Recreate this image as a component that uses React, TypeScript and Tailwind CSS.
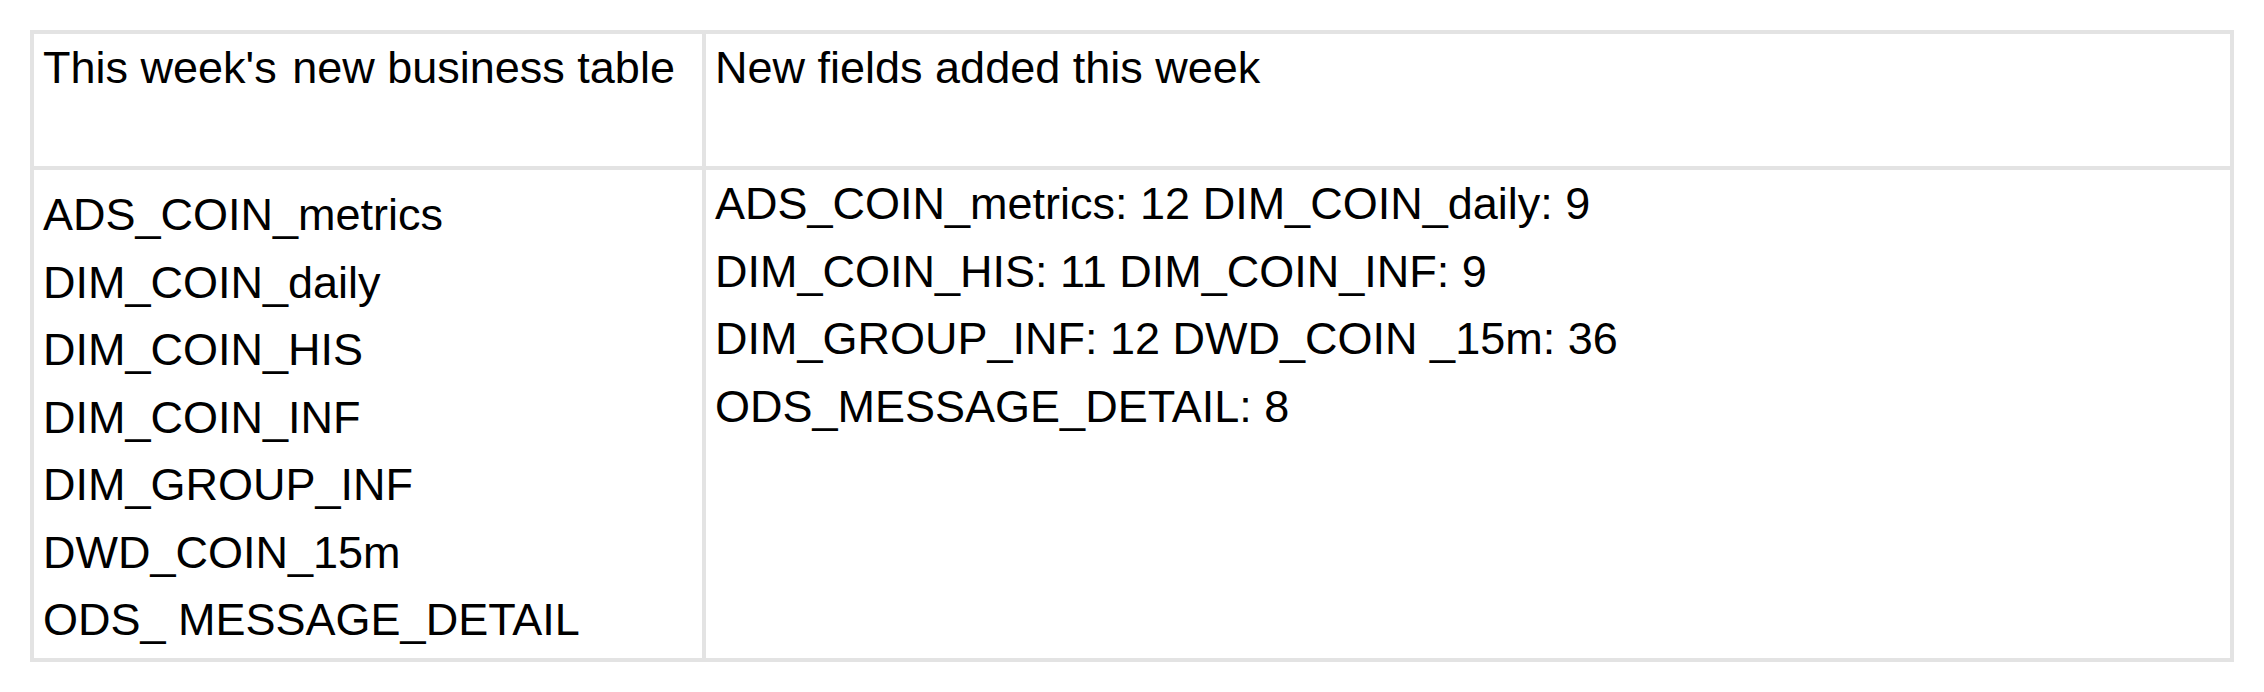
const LEFT_ROWS = [
  "ADS_COIN_metrics",
  "DIM_COIN_daily",
  "DIM_COIN_HIS",
  "DIM_COIN_INF",
  "DIM_GROUP_INF",
  "DWD_COIN_15m",
  "ODS_ MESSAGE_DETAIL",
];

const RIGHT_ROWS = [
  "ADS_COIN_metrics: 12 DIM_COIN_daily: 9",
  "DIM_COIN_HIS: 11 DIM_COIN_INF: 9",
  "DIM_GROUP_INF: 12 DWD_COIN _15m: 36",
  "ODS_MESSAGE_DETAIL: 8",
];

export default function App() {
  return (
    <div className="min-h-screen bg-white p-[30px] font-['Liberation_Sans',Arial,sans-serif] text-[45px] leading-[1.5] text-black">
      <div className="flex w-[2204px] flex-col border-4 border-[#e3e3e3]">
        <div className="flex h-[136px] border-b-4 border-[#e3e3e3]">
          <div className="w-[672px] shrink-0 border-r-4 border-[#e3e3e3] px-[9px]">
            This week's <span className="ml-[3px]">new business table</span>
          </div>
          <div className="flex-1 px-[9px]">New fields added this week</div>
        </div>
        <div className="flex h-[488px]">
          <div className="w-[672px] shrink-0 border-r-4 border-[#e3e3e3] px-[9px] pt-[11px]">
            {LEFT_ROWS.map((row) => (
              <div key={row} className="whitespace-pre">
                {row}
              </div>
            ))}
          </div>
          <div className="flex-1 px-[9px]">
            {RIGHT_ROWS.map((row) => (
              <div key={row} className="whitespace-pre">
                {row}
              </div>
            ))}
          </div>
        </div>
      </div>
    </div>
  );
}
